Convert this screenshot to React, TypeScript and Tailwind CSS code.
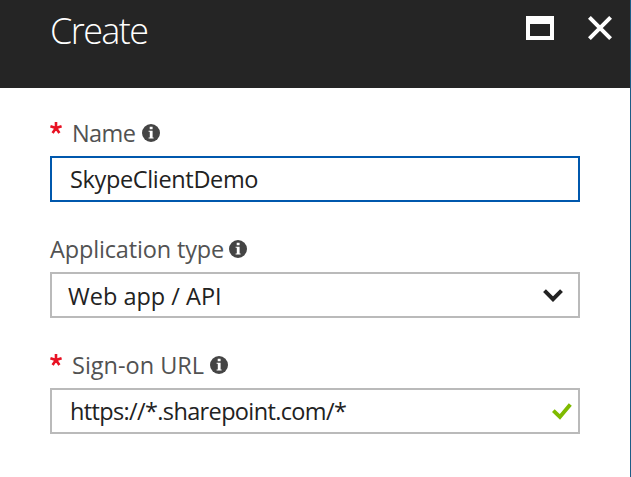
import React from "react";

function InfoIcon() {
  return (
    <svg className="block h-[18px] w-[18px] shrink-0" viewBox="0 0 18 18">
      <circle cx="9" cy="9" r="9" fill="#444444" />
      <path d="M7.7 2.8H10.6V5.2H7.7ZM6.6 6.8H10.6V13.6H11.6V14.6H6.6V13.6H7.8V7.8H6.6Z" fill="#fff" />
    </svg>
  );
}

function Star() {
  return (
    <svg className="mr-[10px] block h-[12px] w-[12px] shrink-0" viewBox="0 0 12 12">
      <path d="M6 6V0M6 6L0.4 4.2M6 6L11.6 4.2M6 6L2.6 11M6 6L9.4 11" stroke="#e81123" strokeWidth="2.6" />
    </svg>
  );
}

function Field(props: {
  label: string;
  labelClass: string;
  required?: boolean;
  boxClass: string;
  value: string;
  valueClass: string;
  children?: React.ReactNode;
}) {
  return (
    <div className="flex h-[116px] flex-col">
      <div className="flex h-[46px] items-start text-[23.5px] leading-[34px] text-[#525252]">
        {props.required && <div className="mt-[12px]"><Star /></div>}
        <span className={"mt-[6px] shrink-0 whitespace-nowrap " + props.labelClass}>{props.label}</span>
        <div className="mt-[14px]"><InfoIcon /></div>
      </div>
      <div className={"flex h-[46px] w-[530px] items-center border-2 " + props.boxClass}>
        <span className={"whitespace-nowrap text-[23.5px] leading-[34px] text-[#222] " + props.valueClass}>{props.value}</span>
        {props.children}
      </div>
    </div>
  );
}

export default function App() {
  return (
    <div className="flex h-[477px] w-[631px] overflow-hidden bg-white font-['Open_Sans','Noto_Sans',sans-serif]">
      <div className="flex w-[630px] flex-col">
        <header className="flex h-[88px] items-start bg-[#252525] pl-[50px]">
          <h1 className="mt-[6px] w-[476px] text-[36px] leading-[50px] font-light tracking-[-1.6px] text-white">Create</h1>
          <div className="mt-[16px] h-[24px] w-[28px] border-4 border-t-8 border-white" />
          <svg className="mt-[16px] ml-[34px] h-[24px] w-[24px]" viewBox="0 0 24 24">
            <path d="M1.4 1.4L22.6 22.6M22.6 1.4L1.4 22.6" stroke="#fff" strokeWidth="4" />
          </svg>
        </header>
        <main className="flex flex-col pt-[22px] pl-[50px]">
          <Field label="Name" labelClass="w-[70px] tracking-[-0.6px]" required boxClass="border-[#0058ad]" value="SkypeClientDemo" valueClass="pl-[18px] tracking-[-0.35px]" />
          <Field label="Application type" labelClass="w-[179px] tracking-[-0.15px]" boxClass="border-[#bababa] justify-between" value="Web app / API" valueClass="pl-[16px] pt-[2px]">
            <svg className="mr-[15px] h-[13px] w-[20px]" viewBox="0 0 20 13">
              <path d="M1.5 1.7L10 10.2L18.5 1.7" fill="none" stroke="#222" strokeWidth="4" />
            </svg>
          </Field>
          <Field label="Sign-on URL" labelClass="w-[138px]" required boxClass="border-[#bababa] justify-between" value="https://*.sharepoint.com/*" valueClass="pl-[18px] tracking-[-0.64px]">
            <svg className="mr-[6px] h-[17px] w-[20px]" viewBox="0 0 20 17">
              <path d="M1.3 7.6L7.9 14L18.3 1.4" fill="none" stroke="#7fba00" strokeWidth="3.9" />
            </svg>
          </Field>
        </main>
      </div>
      <div className="w-px bg-[#1d5c87]" />
    </div>
  );
}
